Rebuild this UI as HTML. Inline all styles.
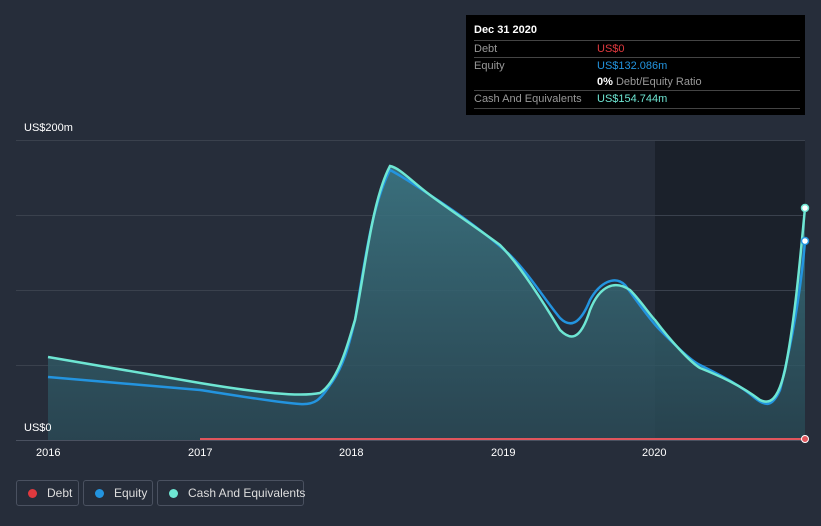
<!DOCTYPE html><html><head><style>
body{margin:0;width:821px;height:526px;background:#262d3a;font-family:"Liberation Sans",sans-serif;overflow:hidden;position:relative}
.t{position:absolute;font-size:11px;color:#fff}
.tip{position:absolute;left:466px;top:15px;width:339px;height:100px;background:#000;font-size:11px}
.row{position:absolute;left:8px;right:5px;border-top:1px solid #444;height:17px;line-height:16px;color:#999}
.row span{position:absolute;left:123px}
.leg{position:absolute;top:480px;height:26px;border:1px solid #4a5160;border-radius:3px;color:#ddd;font-size:12px;line-height:25px;box-sizing:border-box;white-space:nowrap}
.leg i{display:inline-block;width:9px;height:9px;border-radius:50%;margin:0 10px 0 11px;vertical-align:-1px}
</style></head><body>
<svg width="821" height="526" style="position:absolute;left:0;top:0">
<rect x="655" y="140" width="150" height="300" fill="#1b212b"/>
<g stroke="#3a414d" stroke-width="1"><line x1="16" y1="140.5" x2="805" y2="140.5"/><line x1="16" y1="215.5" x2="805" y2="215.5"/><line x1="16" y1="290.5" x2="805" y2="290.5"/><line x1="16" y1="365.5" x2="805" y2="365.5"/></g>
<defs><linearGradient id="g" x1="0" y1="0" x2="0" y2="1"><stop offset="0" stop-color="#3d7b88" stop-opacity=".85"/><stop offset="1" stop-color="#2a4a56" stop-opacity=".8"/></linearGradient></defs>
<path d="M48,357 L200,383 C260,393 300,397 320,393 C340,380 350,335 355,320 C365,270 372,200 390,166 C400,168 410,180 430,195 C450,210 480,230 500,245 C520,265 545,305 560,330 C570,340 580,342 590,310 C600,285 615,280 630,290 C640,300 650,315 655,320 C670,340 690,362 700,368 C720,376 740,385 760,400 C770,405 778,400 785,370 C795,320 800,260 805,208 L805,440 L48,440 Z" fill="url(#g)"/>
<path d="M48,377 L200,390 C240,396 280,403 300,404 C315,405 320,400 330,385 C345,365 350,340 355,320 C365,260 372,205 390,170 C405,178 415,185 430,195 C450,208 480,228 510,255 C530,275 545,300 560,318 C570,328 580,325 590,300 C600,282 615,275 625,285 C640,305 650,320 660,330 C675,345 690,360 700,365 C720,375 740,385 755,398 C765,406 772,408 780,390 C790,350 800,300 805,241" fill="none" stroke="#2394df" stroke-width="2.5"/>
<path d="M48,357 L200,383 C260,393 300,397 320,393 C340,380 350,335 355,320 C365,270 372,200 390,166 C400,168 410,180 430,195 C450,210 480,230 500,245 C520,265 545,305 560,330 C570,340 580,342 590,310 C600,285 615,280 630,290 C640,300 650,315 655,320 C670,340 690,362 700,368 C720,376 740,385 760,400 C770,405 778,400 785,370 C795,320 800,260 805,208" fill="none" stroke="#6ee6d3" stroke-width="2.5"/>
<line x1="16" y1="440.5" x2="805" y2="440.5" stroke="#4a5160"/>
<line x1="200" y1="439" x2="805" y2="439" stroke="#e0555c" stroke-width="2"/>
<circle cx="805" cy="208" r="3.5" fill="#fff" stroke="#6ee6d3" stroke-width="1.5"/>
<circle cx="805" cy="241" r="3.5" fill="#fff" stroke="#2394df" stroke-width="1.5"/>
<circle cx="805" cy="439" r="3.5" fill="#e0555c" stroke="#fff" stroke-width="1"/>
</svg>
<div class="t" style="left:24px;top:122px">US$200m</div>
<div class="t" style="left:24px;top:422px">US$0</div>
<div class="t" style="left:36px;top:447px">2016</div>
<div class="t" style="left:188px;top:447px">2017</div>
<div class="t" style="left:339px;top:447px">2018</div>
<div class="t" style="left:491px;top:447px">2019</div>
<div class="t" style="left:642px;top:447px">2020</div>
<div class="tip">
<div style="position:absolute;left:8px;top:9px;color:#fff;font-weight:bold">Dec 31 2020</div>
<div class="row" style="top:25px">Debt<span style="color:#e0393e">US$0</span></div>
<div class="row" style="top:42px">Equity<span style="color:#2394df">US$132.086m</span></div>
<div style="position:absolute;left:131px;top:59px;color:#999;line-height:16px"><b style="color:#fff">0%</b> Debt/Equity Ratio</div>
<div class="row" style="top:75px;border-bottom:1px solid #444">Cash And Equivalents<span style="color:#6ee6d3">US$154.744m</span></div>
</div>
<div class="leg" style="left:16px;width:63px"><i style="background:#e0393e"></i>Debt</div>
<div class="leg" style="left:83px;width:70px"><i style="background:#2394df"></i>Equity</div>
<div class="leg" style="left:157px;width:147px"><i style="background:#6ee6d3"></i>Cash And Equivalents</div>
</body></html>
